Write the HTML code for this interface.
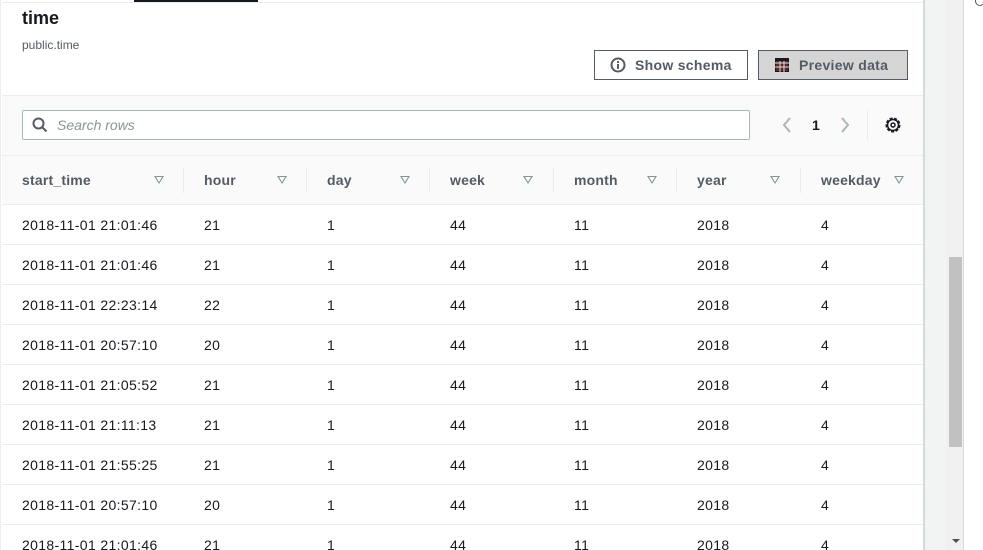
<!DOCTYPE html><html><head><style>
*{margin:0;padding:0;box-sizing:border-box}
html,body{width:983px;height:550px;overflow:hidden}
body{background:#fff;font-family:"Liberation Sans",sans-serif;color:#16191f;position:relative}
.abs{position:absolute}
.hdr{font-size:14px;font-weight:bold;color:#545b64;letter-spacing:0.2px}
.tri{position:absolute;width:0;height:0;border-left:5px solid transparent;border-right:5px solid transparent;border-top:8px solid #879596;top:176px}
.tri:after{content:"";position:absolute;left:-3px;top:-7px;border-left:3px solid transparent;border-right:3px solid transparent;border-top:5px solid #fafafa}
.cell{position:absolute;font-size:14px;color:#16191f;letter-spacing:0.35px}
.rowline{position:absolute;left:2px;width:921px;height:1px;background:#eaeded}
</style></head><body>
<div class="abs" style="left:0;top:0;width:925px;height:550px;border-left:1px solid #eaeded;border-right:2px solid #d5dbdb"></div>
<div class="abs" style="left:2px;top:2px;width:921px;height:1px;background:#eaeded"></div>
<div class="abs" style="left:134px;top:0;width:124px;height:2px;background:#16191f"></div>
<div class="abs" style="left:22px;top:8px;font-size:18px;font-weight:bold">time</div>
<div class="abs" style="left:22px;top:38px;font-size:12px;color:#545b64">public.time</div>
<div class="abs" style="left:594px;top:50px;width:154px;height:30px;border:1px solid #545b64;background:#fff"></div>
<svg class="abs" style="left:610px;top:57px" width="16" height="16" viewBox="0 0 16 16"><circle cx="8" cy="8" r="6.5" fill="none" stroke="#545b64" stroke-width="2"/><rect x="7" y="7" width="2" height="5" fill="#545b64"/><rect x="7" y="4" width="2" height="2" fill="#545b64"/></svg>
<div class="abs" style="left:635px;top:57px;font-size:14px;font-weight:bold;color:#545b64;letter-spacing:0.3px">Show schema</div>
<div class="abs" style="left:758px;top:50px;width:150px;height:30px;border:1px solid #545b64;background:#d5d5d5"></div>
<svg class="abs" style="left:775px;top:58px" width="14" height="14" viewBox="0 0 14 14"><rect x="0.5" y="0.5" width="13" height="13" fill="#5a2a2a" stroke="#16191f"/><path d="M0 5H14M0 9H14M5 0V14M9 0V14" stroke="#ddd" stroke-width="1"/><rect x="0" y="0" width="14" height="3" fill="#16191f"/></svg>
<div class="abs" style="left:799px;top:57px;font-size:14px;font-weight:bold;color:#545b64;letter-spacing:0.3px">Preview data</div>
<div class="abs" style="left:2px;top:95px;width:921px;height:110px;background:#fafafa;border-top:1px solid #eaeded"></div>
<div class="abs" style="left:2px;top:155px;width:921px;height:1px;background:#eaeded"></div>
<div class="abs" style="left:2px;top:204px;width:921px;height:1px;background:#eaeded"></div>
<div class="abs" style="left:22px;top:110px;width:728px;height:30px;border:1px solid #aab7b8;background:#fff;border-radius:2px"></div>
<svg class="abs" style="left:32px;top:117px" width="16" height="16" viewBox="0 0 16 16"><circle cx="6.5" cy="6.5" r="5" fill="none" stroke="#545b64" stroke-width="2"/><path d="M10 10L14.5 14.5" stroke="#545b64" stroke-width="2"/></svg>
<div class="abs" style="left:57px;top:117px;font-size:14px;font-style:italic;color:#879596">Search rows</div>
<svg class="abs" style="left:780px;top:115px" width="14" height="20"><path d="M10 3L4 10L10 17" fill="none" stroke="#aab7b8" stroke-width="2"/></svg>
<div class="abs" style="left:812px;top:117px;font-size:14px;font-weight:bold">1</div>
<svg class="abs" style="left:838px;top:115px" width="14" height="20"><path d="M4 3L10 10L4 17" fill="none" stroke="#aab7b8" stroke-width="2"/></svg>
<div class="abs" style="left:867px;top:110px;width:1px;height:30px;background:#eaeded"></div>
<svg class="abs" style="left:884px;top:116px" width="18" height="18" viewBox="0 0 18 18"><circle cx="9" cy="9" r="6.5" fill="none" stroke="#16191f" stroke-width="2" stroke-dasharray="3 1.5"/><circle cx="9" cy="9" r="5.5" fill="none" stroke="#16191f" stroke-width="1.5"/><circle cx="9" cy="9" r="2" fill="none" stroke="#16191f" stroke-width="1.5"/></svg>
<div class="hdr abs" style="left:22px;top:172px">start_time</div>
<div class="hdr abs" style="left:204px;top:172px">hour</div>
<div class="hdr abs" style="left:327px;top:172px">day</div>
<div class="hdr abs" style="left:450px;top:172px">week</div>
<div class="hdr abs" style="left:574px;top:172px">month</div>
<div class="hdr abs" style="left:697px;top:172px">year</div>
<div class="hdr abs" style="left:821px;top:172px">weekday</div>
<div class="tri" style="left:154px"></div><div class="tri" style="left:277px"></div><div class="tri" style="left:400px"></div><div class="tri" style="left:523px"></div><div class="tri" style="left:647px"></div><div class="tri" style="left:770px"></div><div class="tri" style="left:894px"></div>
<div class="abs" style="left:183px;top:168px;width:1px;height:25px;background:#eaeded"></div>
<div class="abs" style="left:306px;top:168px;width:1px;height:25px;background:#eaeded"></div>
<div class="abs" style="left:429px;top:168px;width:1px;height:25px;background:#eaeded"></div>
<div class="abs" style="left:553px;top:168px;width:1px;height:25px;background:#eaeded"></div>
<div class="abs" style="left:676px;top:168px;width:1px;height:25px;background:#eaeded"></div>
<div class="abs" style="left:800px;top:168px;width:1px;height:25px;background:#eaeded"></div>
<div id="rows"></div>
<script>
var d=[["21:01:46",21],["21:01:46",21],["22:23:14",22],["20:57:10",20],["21:05:52",21],["21:11:13",21],["21:55:25",21],["20:57:10",20],["21:01:46",21]];
var h="";d.forEach(function(r,i){var y=205+i*40;
if(i<8)h+='<div class="rowline" style="top:'+(y+39)+'px"></div>';
var t=y+12;var xs=[22,204,327,450,574,697,821];var v=["2018-11-01 "+r[0],r[1],1,44,11,2018,4];
xs.forEach(function(x,j){h+='<div class="cell" style="left:'+x+'px;top:'+t+'px">'+v[j]+'</div>'});});
document.getElementById("rows").innerHTML=h;
</script>
<div class="abs" style="left:925px;top:0;width:38px;height:550px;background:#f2f3f3"></div>
<div class="abs" style="left:946px;top:0;width:17px;height:550px;background:#f0f0f0"></div>
<div class="abs" style="left:949px;top:257px;width:13px;height:190px;background:#c1c1c1"></div>
<div class="abs" style="left:952px;top:539px;border-left:4px solid transparent;border-right:4px solid transparent;border-top:4px solid #505050"></div>
<div class="abs" style="left:963px;top:0;width:1px;height:550px;background:#d5dbdb"></div>
<div class="abs" style="left:975px;top:-4px;width:10px;height:10px;border:1.5px solid #545b64;border-radius:50%"></div>
</body></html>
